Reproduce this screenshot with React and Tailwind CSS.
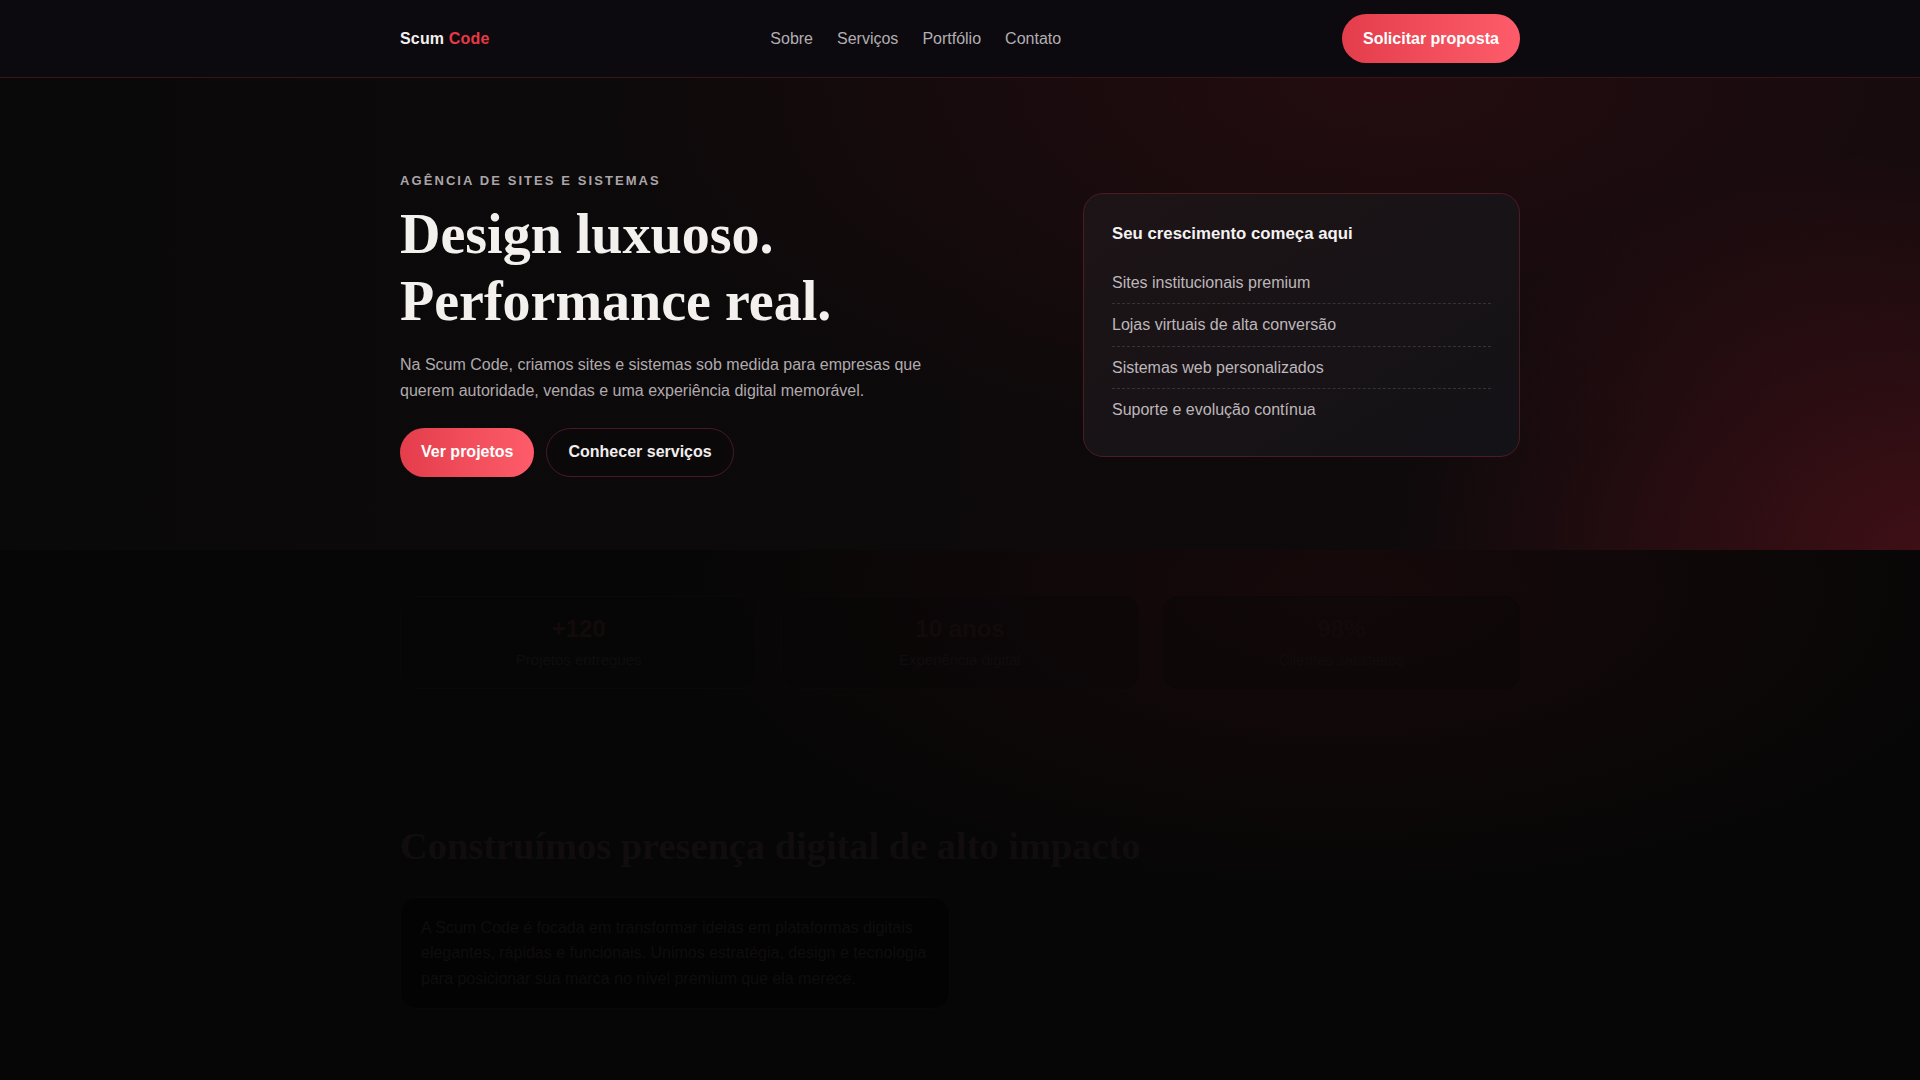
const links = ['Sobre', 'Serviços', 'Portfólio', 'Contato']

const services = [
  'Sites institucionais premium',
  'Lojas virtuais de alta conversão',
  'Sistemas web personalizados',
  'Suporte e evolução contínua'
]

const stats = [
  { n: '+120', l: 'Projetos entregues' },
  { n: '10 anos', l: 'Experiência digital' },
  { n: '98%', l: 'Clientes satisfeitos' }
]

function Header() {
  return (
    <header className="border-b border-[#3b141b] bg-[#0c0a0f]">
      <div className="mx-auto flex max-w-[1120px] items-center justify-between py-[14px]">
        <a className="text-[16px] font-bold tracking-[0.01em] text-[#f3f0f0]">
          Scum <span className="text-[#e63946]">Code</span>
        </a>
        <nav className="flex items-center gap-6 text-[16px] text-[#b3aeb2]">
          {links.map(l => (
            <a key={l}>{l}</a>
          ))}
        </nav>
        <button className="h-[49px] rounded-full bg-gradient-to-r from-[#e43d4c] to-[#fe5c6a] px-[21px] text-[16px] font-bold text-white">
          Solicitar proposta
        </button>
      </div>
    </header>
  )
}

function Hero() {
  return (
    <section className="bg-[radial-gradient(ellipse_520px_400px_at_100%_100%,rgba(150,25,40,0.34),transparent),radial-gradient(ellipse_800px_380px_at_72%_0%,rgba(110,22,32,0.22),transparent),linear-gradient(90deg,#0a0909,#100a0c)] pt-[95px] pb-[73px]">
      <div className="mx-auto grid max-w-[1120px] grid-cols-[minmax(0,1fr)_437px] items-center gap-12">
        <div>
          <div className="text-[13px] leading-4 font-bold tracking-[0.16em] text-[#aaa5a8] uppercase">
            Agência de sites e sistemas
          </div>
          <h1 className="mt-3 font-['Liberation_Serif',serif] text-[56px] leading-[1.2] font-bold text-[#f3f0ee]">
            Design luxuoso.
            <br />
            Performance real.
          </h1>
          <p className="mt-[17px] max-w-[540px] text-[16px] leading-[1.6] text-[#b0aaae]">
            Na Scum Code, criamos sites e sistemas sob medida para empresas que querem autoridade, vendas e uma
            experiência digital memorável.
          </p>
          <div className="mt-6 flex gap-3">
            <button className="h-[49px] rounded-full bg-gradient-to-r from-[#e43d4c] to-[#fe5c6a] px-[21px] text-[16px] font-bold text-white">
              Ver projetos
            </button>
            <button className="h-[49px] rounded-full border border-[#4a1a22] bg-[#0b090a]/60 px-[21px] text-[16px] font-bold text-[#f2eeee]">
              Conhecer serviços
            </button>
          </div>
        </div>

        <div className="rounded-[20px] border border-[#4d1b24] bg-gradient-to-br from-[#1d1417] to-[#131216] px-7 pt-7 pb-[25px]">
          <h3 className="text-[16.8px] leading-6 font-bold text-[#f5f2f2]">Seu crescimento começa aqui</h3>
          <ul className="mt-4">
            {services.map((s, i) => (
              <li
                key={s}
                className={`py-[10px] text-[16px] leading-[21.5px] text-[#bdb7ba] ${
                  i < services.length - 1 ? 'border-b border-dashed border-[#3a3135]' : ''
                }`}
              >
                {s}
              </li>
            ))}
          </ul>
        </div>
      </div>
    </section>
  )
}

function Stats() {
  return (
    <section className="pt-[46px]">
      <div className="mx-auto grid max-w-[1120px] grid-cols-3 gap-6">
        {stats.map(s => (
          <div key={s.l} className="rounded-2xl border border-[#0a0808] bg-[#080707]/30 py-4 text-center">
            <div className="text-[24px] leading-[31px] font-bold text-[#130a0b]">{s.n}</div>
            <div className="mt-1 text-[15px] leading-6 text-[#0f0d0e]">{s.l}</div>
          </div>
        ))}
      </div>
    </section>
  )
}

function About() {
  return (
    <section className="pt-[134px]">
      <div className="mx-auto max-w-[1120px]">
        <h2 className="font-['Liberation_Serif',serif] text-[38.4px] leading-[1.2] font-bold text-[#110d0e]">
          Construímos presença digital de alto impacto
        </h2>
        <div className="mt-7 w-[550px] rounded-2xl border border-[#090808] bg-[#030303] px-5 py-[17px]">
          <p className="text-[16px] leading-[1.6] text-[#0f0d0d]">
            A Scum Code é focada em transformar ideias em plataformas digitais elegantes, rápidas e funcionais.
            Unimos estratégia, design e tecnologia para posicionar sua marca no nível premium que ela merece.
          </p>
        </div>
      </div>
    </section>
  )
}

export default function App() {
  return (
    <div className="min-h-screen bg-[#060606] bg-[radial-gradient(ellipse_700px_320px_at_70%_590px,rgba(110,25,35,0.16),transparent)] pb-24 font-['Liberation_Sans',Arial,sans-serif]">
      <Header />
      <Hero />
      <Stats />
      <About />
    </div>
  )
}
